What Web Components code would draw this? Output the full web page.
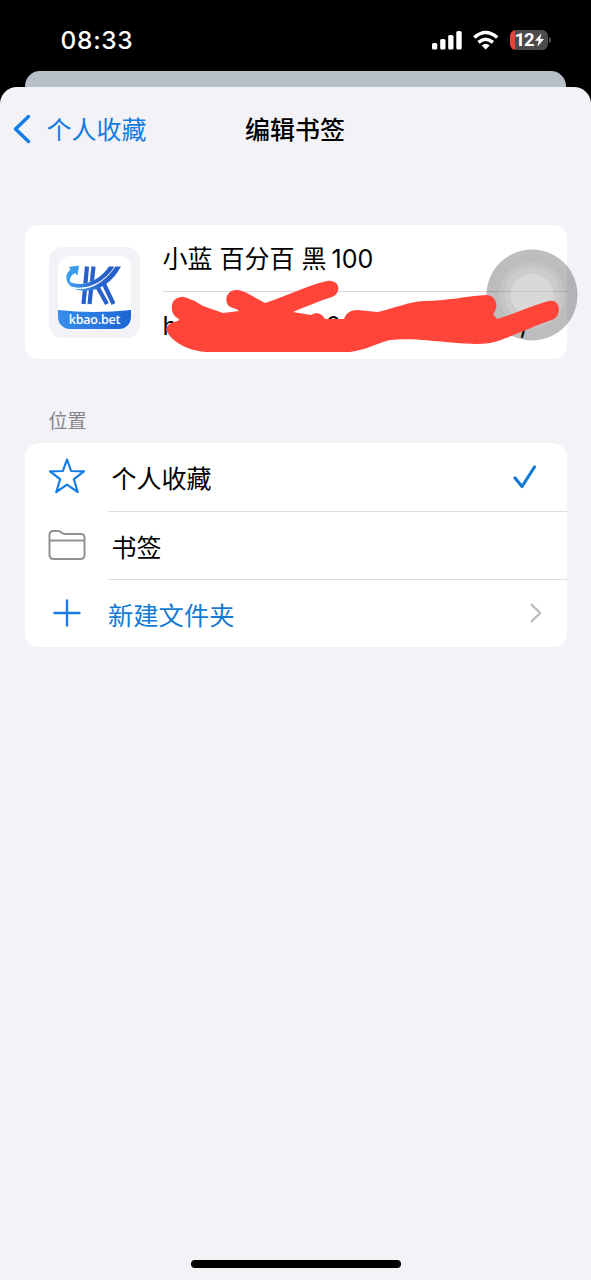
<!DOCTYPE html>
<html lang="zh-CN"><head><meta charset="utf-8"><title>编辑书签</title>
<style>html,body{margin:0;height:100%;background:#000}body{font-family:Inter,"Noto Sans CJK SC",sans-serif;overflow:hidden}</style></head>
<body><bookmark-screen></bookmark-screen>
<script>
const define=(name,html)=>{
  const t=document.createElement('template');t.innerHTML=html;
  customElements.define(name,class extends HTMLElement{
    constructor(){super();this.attachShadow({mode:'open'}).append(t.content.cloneNode(true));}
  });
};
define('status-bar',`<style>
:host{display:flex;height:71px;box-sizing:border-box;padding:8px 43.5px 0 60.5px;align-items:center;justify-content:space-between;color:#fff}
.time{font-size:24.5px;font-weight:550;line-height:30px;letter-spacing:.7px;padding-top:1px}
.icons{display:flex;align-items:center}
svg{display:block}
.bat{display:grid;width:38px;height:20px;border-radius:6px;background:linear-gradient(90deg,#ea4238 5px,#4c4c4e 5px);position:relative;grid-template-columns:20px 10px;align-items:center;padding-left:5px;box-sizing:border-box;margin-left:11px}
.bat b{font:700 18.5px/20px Roboto,sans-serif;letter-spacing:-1px}
.bat:after{content:"";position:absolute;left:39px;top:7px;width:2px;height:6px;border-radius:0 2px 2px 0;background:#4c4c4e}
</style>
<span class="time">08:33</span>
<span class="icons"><svg width="30" height="20" viewBox="0 0 30 20" fill="#fff"><rect y="13" width="5.3" height="6.5" rx="1.5"/><rect x="8.2" y="9" width="5.3" height="10.5" rx="1.5"/><rect x="16.2" y="5" width="5.3" height="14.5" rx="1.5"/><rect x="24.3" y="1" width="5.4" height="18.5" rx="1.5"/></svg>
<svg style="margin-left:11px" width="26" height="20" viewBox="0 0 26 20" fill="none" stroke="#fff" stroke-width="3.5"><path d="M1.3 7.5Q12.7-2.5 24.2 7.5M5.5 12.4Q12.7 6 19.9 12.4"/><path d="M8.7 15.6Q12.7 12 16.7 15.6L12.7 19.6Z" fill="#fff" stroke="none"/></svg>
<span class="bat"><b>12</b><svg width="9" height="14" viewBox="0 0 10 15"><path d="M7.2 0L0 8.3H4.1L2.5 15L10 6.3H5.7Z" fill="#fff"/></svg></span></span>`);

define('nav-bar',`<style>
:host{display:grid;grid-template-columns:1fr auto 1fr;align-items:center;height:84px;padding:0 15px 0 14px;font-size:25px;line-height:36px}
.back{display:flex;align-items:center;gap:15.5px;color:#147ce0}
.back svg{margin-left:-1px}
.back span,h1{padding-top:2px}
h1{font-size:25px;font-weight:500;margin:0}
</style><div class="back"><svg width="18" height="30" viewBox="0 0 18 30" fill="none" stroke="#147ce5" stroke-width="3.4" stroke-linecap="round" stroke-linejoin="round"><path d="M15.5 2.5L2.5 15L15.5 27.5"/></svg><span><slot></slot></span></div><h1><slot name="title"></slot></h1><span></span>`);

define('site-icon',`<style>
:host{display:block;width:91px;height:91px;border-radius:14px;background:#f2f2f7;padding:9px;box-sizing:border-box}
.tile{width:73px;height:73px;border-radius:12px;background:#fff;overflow:hidden;display:grid;grid-template-rows:54.5px 18.5px}
.label{background:linear-gradient(90deg,#398dec,#1c65d4);color:#fff;font:600 12.5px/17.5px "Open Sans",sans-serif;text-align:center;clip-path:path("M0 0Q36 4 73 0V19H0Z");padding-top:1px;letter-spacing:-.2px}
svg{display:block}
</style><div class="tile"><svg width="73" height="54" viewBox="0 0 73 54"><defs><linearGradient id="g"><stop stop-color="#45a9f3"/><stop offset=".55" stop-color="#2867cf"/><stop offset="1" stop-color="#245bc4"/></linearGradient></defs>
<g fill="none" stroke="#295fc8" stroke-width="4.2"><path d="M29 10.5L25.5 48M35.5 10.5L31.5 48M39.5 31L49 48M45.5 27L55.5 48"/></g>
<path d="M9 26C22 33 43 24 54 10H65C52 29 32 39 13 32Z" fill="#fff"/>
<path d="M9 24C21 33 41 26 51 10.5H56.5C45 29 24 35 12 30Z" fill="url(#g)"/><path d="M15 32.5C33 35.5 47 26 57.5 10.5H63C52 31 34 39 15 32.5Z" fill="url(#g)"/>
<path d="M10.5 28C7 22 8 17 12.5 13.5L11 11L21 9.5L19.5 19.5L17 17C12 20 11 23 12.5 29Z" fill="#399cec"/></svg><div class="label">kbao.bet</div></div>`);

define('bookmark-card',`<style>
:host{display:grid;grid-template-columns:91px 1fr;column-gap:22.5px;align-items:center;height:134px;border-radius:14px;background:#fff;padding-left:24px;box-sizing:border-box;font-size:25px;position:relative}
.fields{display:grid;grid-template-rows:67px 67px}
.name{border-bottom:1px solid #d8d8dc;line-height:67px;height:67px;padding-top:1px;box-sizing:border-box;white-space:pre}
.n{margin-left:5px;font-size:25px;letter-spacing:0}
.url{display:flex;align-items:center;height:67px;line-height:30px}
.url span:nth-child(2){margin-left:140px}.url span:nth-child(3){margin-left:179px}
.touch{position:absolute;left:460.5px;top:23.5px}
.mark{position:absolute;left:138px;top:51px}
svg{display:block}
</style><site-icon></site-icon><div class="fields"><div class="name"><slot></slot><span class="n"><slot name="num"></slot></span></div><div class="url"><span>ht</span><span>0</span><span>/</span></div></div>
<svg class="touch" width="92" height="92" viewBox="0 0 92 92"><circle cx="46" cy="46" r="45.5" fill="#000" fill-opacity=".26"/><circle cx="46" cy="46" r="33" fill="#fff" fill-opacity=".13"/><circle cx="46" cy="46" r="27.5" fill="#fff" fill-opacity=".13"/><circle cx="46" cy="46" r="21.5" fill="#fff" fill-opacity=".24"/></svg>
<svg class="mark" width="400" height="80" viewBox="163 276 400 80"><path fill="#ff453a" d="M166 330C167 324 172 322 178 321Q179 320 179 319C169 315 169 298 181 297C185 296 188 299 192 300C196 301 199 304 203 306L223 313L239 311C236 308 230 308 228 305C223 297 230 289 237 290C241 290 244 292 247 293L265 303C287 296 306 286 327 281C340 279 342 293 332 297C319 301 305 307 293 312L311 315C316 312 322 313 325 319H344C346 313 351 310 357 310L378 312C394 308 409 302 424 301C445 301 468 296 487 295C497 296 499 308 493 314L497 319C515 314 533 305 549 301C560 298 562 314 554 319C532 327 517 334 498 341C483 347 452 342 433 341C419 339 401 339 390 340C375 344 366 350 350 352H207C187 351 171 341 166 330Z"/></svg>`);

define('list-row',`<style>
:host{display:grid;grid-template-columns:83px 1fr;height:68px;font-size:25px;line-height:36px;color:#000}
:host([action]){color:#147ad2}
.icon{display:flex;align-items:center;justify-content:center}
.body{display:flex;align-items:center;justify-content:space-between;border-top:1px solid transparent;padding:0 25px 0 3.5px;box-sizing:border-box;height:68px}
.body>span{padding-top:3px}
:host([line]) .body{border-color:#dedee1;margin-top:-.5px}
:host([line]) .body>span{padding-top:5px}
:host([action]) .body{font-size:25.3px;padding-left:0}
</style><div class="icon"><slot name="icon"></slot></div><div class="body"><span><slot></slot></span><slot name="end"></slot></div>`);

define('bookmark-screen',`<style>
:host{display:block;width:591px;height:1280px;background:#000}
.behind{height:16px;margin:0 25px;background:#b7c0c9;border-radius:15px 15px 0 0}
.sheet{height:1193px;background:#f2f2f7;border-radius:17px 17px 0 0;display:flex;flex-direction:column;box-sizing:border-box;padding-bottom:12px}
bookmark-card{margin:54px 24.5px 0 25px;flex:none}
h2{font-size:19px;font-weight:400;line-height:28px;color:#858589;margin:49px 48.5px 7px}
section{margin:0 24.5px 0 25px;background:#fff;border-radius:14px;overflow:hidden}
.home{width:210px;height:8px;border-radius:4px;background:#000;margin:auto auto 0}
svg{display:block}
</style><status-bar></status-bar><div class="behind"></div><main class="sheet">
<nav-bar>个人收藏<span slot="title">编辑书签</span></nav-bar>
<bookmark-card>小蓝 百分百 黑<span slot="num">100</span></bookmark-card>
<h2>位置</h2>
<section>
<list-row><svg slot="icon" style="margin-top:-2px" width="36" height="36" viewBox="0 0 36 36" fill="none" stroke="#147ce5" stroke-width="2.2" stroke-linejoin="round"><path d="M18 1.5L22.1 13L35 13.4L24.9 21.2L28.7 34L18 26.6L7.3 34L11.1 21.2L1 13.4L13.9 13Z"/></svg>个人收藏<svg slot="end" style="margin:-1px 5px 0 0" width="25" height="26" viewBox="0 0 25 26" fill="none" stroke="#147ad8" stroke-width="3.2" stroke-linecap="round" stroke-linejoin="round"><path d="M3 14L10 22.5L22.5 3"/></svg></list-row>
<list-row line><svg slot="icon" width="38" height="30" viewBox="0 0 38 30" fill="none" stroke="#929294" stroke-width="2"><path d="M1.5 5Q1.5 1 5.5 1H10Q12 1 13.5 2.5Q15 4 17 4H33Q36.5 4 36.5 8V25Q36.5 29 32.5 29H5.5Q1.5 29 1.5 25ZM1.5 10.5H36.5"/></svg>书签</list-row>
<list-row line action><svg slot="icon" width="28" height="28" viewBox="0 0 28 28" stroke="#147ce5" stroke-width="2.4" stroke-linecap="round"><path d="M14 1.5V26.5M1.5 14H26.5"/></svg>新建文件夹<svg slot="end" width="12" height="20" viewBox="0 0 12 20" fill="none" stroke="#bdbdc0" stroke-width="2.4" stroke-linecap="round" stroke-linejoin="round"><path d="M1.8 1.8L10.2 10L1.8 18.2"/></svg></list-row>
</section><div class="home"></div></main>`);
</script></body></html>
